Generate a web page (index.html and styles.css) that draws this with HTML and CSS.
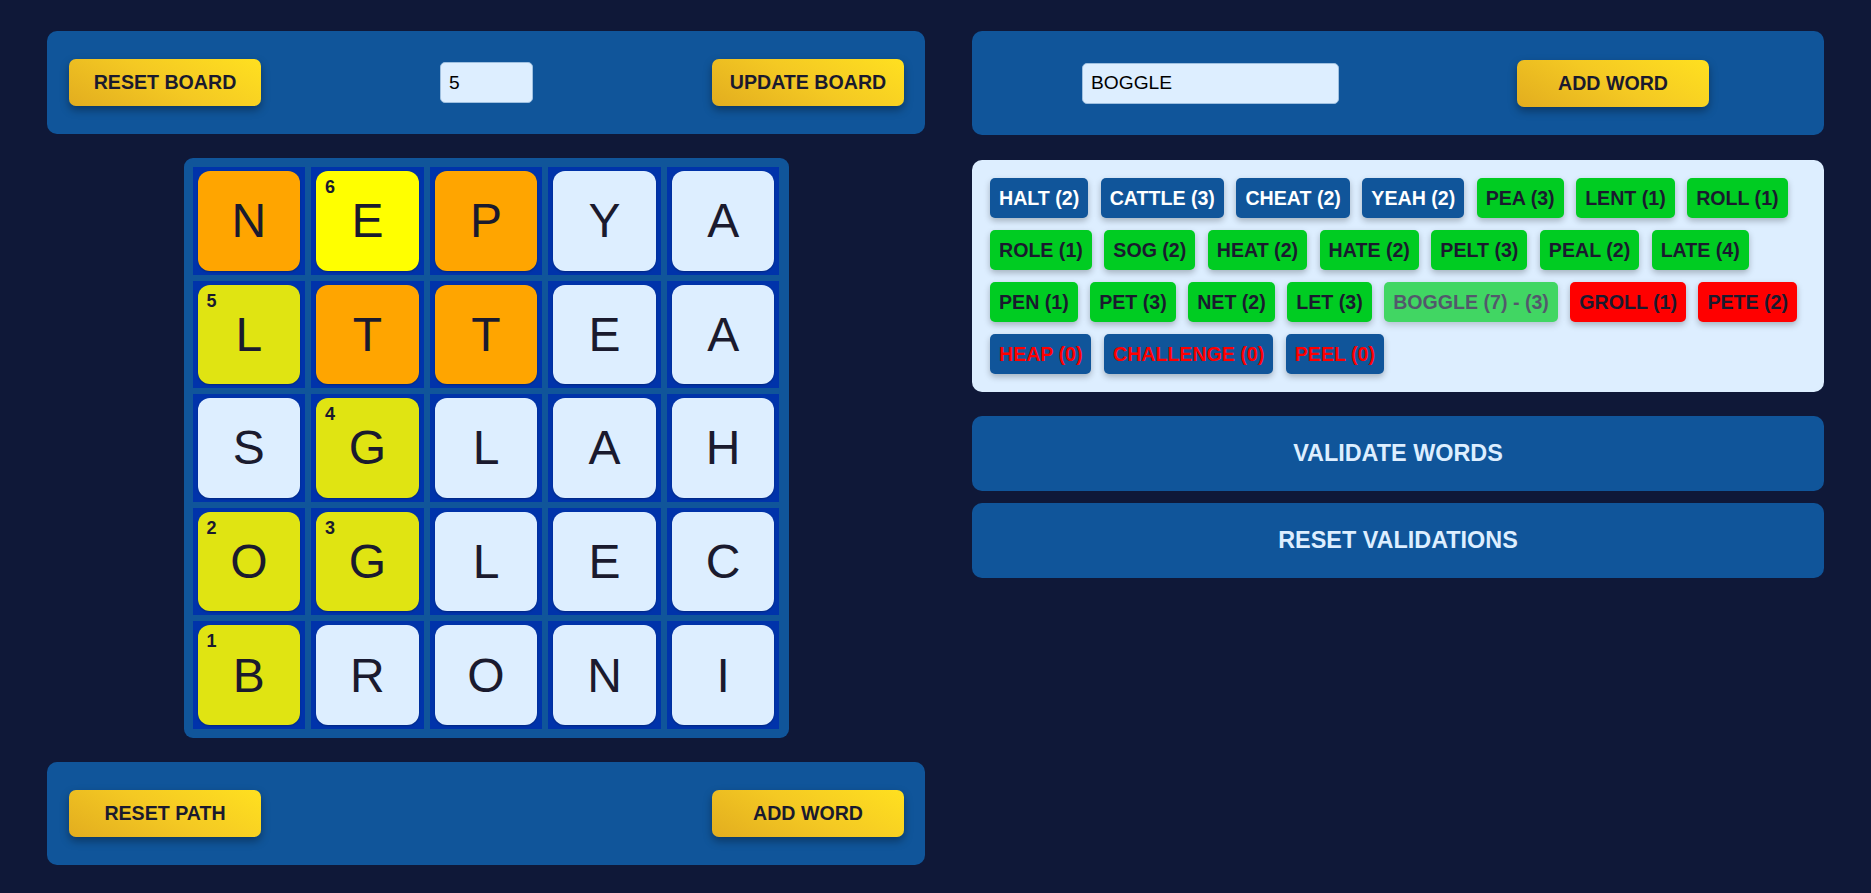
FILE: index.html
```html
<!DOCTYPE html>
<html lang="en">
<head>
<meta charset="utf-8">
<title>Boggle</title>
<link rel="stylesheet" href="styles.css">
</head>
<body>
<div class="app">
  <div class="col left">
    <div class="panel controls">
      <button class="gold-btn">RESET BOARD</button>
      <input class="size-input" type="text" value="5">
      <button class="gold-btn">UPDATE BOARD</button>
    </div>
    <div class="board">
      <div class="cell"><div class="tile orange">N</div></div>
      <div class="cell"><div class="tile yellow"><span class="num">6</span>E</div></div>
      <div class="cell"><div class="tile orange">P</div></div>
      <div class="cell"><div class="tile">Y</div></div>
      <div class="cell"><div class="tile">A</div></div>

      <div class="cell"><div class="tile lime"><span class="num">5</span>L</div></div>
      <div class="cell"><div class="tile orange">T</div></div>
      <div class="cell"><div class="tile orange">T</div></div>
      <div class="cell"><div class="tile">E</div></div>
      <div class="cell"><div class="tile">A</div></div>

      <div class="cell"><div class="tile">S</div></div>
      <div class="cell"><div class="tile lime"><span class="num">4</span>G</div></div>
      <div class="cell"><div class="tile">L</div></div>
      <div class="cell"><div class="tile">A</div></div>
      <div class="cell"><div class="tile">H</div></div>

      <div class="cell"><div class="tile lime"><span class="num">2</span>O</div></div>
      <div class="cell"><div class="tile lime"><span class="num">3</span>G</div></div>
      <div class="cell"><div class="tile">L</div></div>
      <div class="cell"><div class="tile">E</div></div>
      <div class="cell"><div class="tile">C</div></div>

      <div class="cell"><div class="tile lime"><span class="num">1</span>B</div></div>
      <div class="cell"><div class="tile">R</div></div>
      <div class="cell"><div class="tile">O</div></div>
      <div class="cell"><div class="tile">N</div></div>
      <div class="cell"><div class="tile">I</div></div>
    </div>
    <div class="panel controls">
      <button class="gold-btn">RESET PATH</button>
      <button class="gold-btn">ADD WORD</button>
    </div>
  </div>
  <div class="col right">
    <div class="panel add-row">
      <input class="word-input" type="text" value="BOGGLE">
      <button class="gold-btn">ADD WORD</button>
    </div>
    <div class="words">
      <span class="chip blue">HALT (2)</span>
      <span class="chip blue">CATTLE (3)</span>
      <span class="chip blue">CHEAT (2)</span>
      <span class="chip blue">YEAH (2)</span>
      <span class="chip green">PEA (3)</span>
      <span class="chip green">LENT (1)</span>
      <span class="chip green">ROLL (1)</span>
      <span class="chip green">ROLE (1)</span>
      <span class="chip green">SOG (2)</span>
      <span class="chip green">HEAT (2)</span>
      <span class="chip green">HATE (2)</span>
      <span class="chip green">PELT (3)</span>
      <span class="chip green">PEAL (2)</span>
      <span class="chip green">LATE (4)</span>
      <span class="chip green">PEN (1)</span>
      <span class="chip green">PET (3)</span>
      <span class="chip green">NET (2)</span>
      <span class="chip green">LET (3)</span>
      <span class="chip green faded">BOGGLE (7) - (3)</span>
      <span class="chip red">GROLL (1)</span>
      <span class="chip red">PETE (2)</span>
      <span class="chip blue invalid">HEAP (0)</span>
      <span class="chip blue invalid">CHALLENGE (0)</span>
      <span class="chip blue invalid">PEEL (0)</span>
    </div>
    <div class="actions">
      <button class="wide-btn">VALIDATE WORDS</button>
      <button class="wide-btn">RESET VALIDATIONS</button>
    </div>
  </div>
</div>
</body>
</html>
```

FILE: styles.css
```css
* { box-sizing: border-box; }

html, body {
  margin: 0;
  padding: 0;
  background: #0f1838;
}

body {
  font-family: "Liberation Sans", Arial, sans-serif;
  color: #1a1a2e;
}

.app {
  display: grid;
  grid-template-columns: 878px 852px;
  column-gap: 47px;
  padding: 31px 47px 0 47px;
}

.col {
  display: flex;
  flex-direction: column;
}

.left { align-items: stretch; }

.panel {
  background: #10559a;
  border-radius: 10px;
  height: 103px;
  display: flex;
  align-items: center;
}

.controls {
  justify-content: space-between;
  padding: 0 21px 0 22px;
}

.gold-btn {
  width: 192px;
  height: 47px;
  border: none;
  border-radius: 7px;
  background: linear-gradient(30deg, #e2ad1f 0%, #f4c923 50%, #ffe020 100%);
  color: #1a1a2e;
  font-family: "Liberation Sans", Arial, sans-serif;
  font-weight: bold;
  font-size: 19.6px;
  box-shadow: 0 4px 8px rgba(0, 0, 0, 0.35);
  cursor: pointer;
}

.size-input,
.word-input {
  height: 41px;
  border: 1px solid #9fc0e0;
  border-radius: 5px;
  background: #ddeeff;
  font-family: "Liberation Sans", Arial, sans-serif;
  font-size: 19.2px;
  color: #000;
  padding: 0 8px;
  outline: none;
}

.size-input { width: 93px; }
.word-input { width: 257px; }

.board {
  align-self: center;
  width: 605px;
  margin: 24px 0 24px;
  background: #10559a;
  border-radius: 9px;
  padding: 9px;
  display: grid;
  grid-template-columns: repeat(5, 1fr);
  gap: 6px;
}

.cell {
  background: #0033aa;
  padding: 4px 5px;
}

.tile {
  position: relative;
  height: 99.6px;
  border-radius: 12px;
  background: #ddeeff;
  display: flex;
  align-items: center;
  justify-content: center;
  font-size: 48px;
  color: #1a1a2e;
  box-shadow: 0 1px 2px rgba(0, 0, 0, 0.25);
}

.tile.orange { background: #ffa500; }
.tile.yellow { background: #ffff00; }
.tile.lime { background: #e0e412; }

.num {
  position: absolute;
  top: 6px;
  left: 9px;
  font-size: 18px;
  font-weight: bold;
  line-height: 20px;
}

.add-row {
  justify-content: space-around;
  padding: 0 26px 0 21px;
  height: 104px;
}

.words {
  margin-top: 25px;
  background: #ddeeff;
  border-radius: 10px;
  padding: 18px;
  display: flex;
  flex-wrap: wrap;
  gap: 12px 12.5px;
}

.chip {
  display: inline-block;
  height: 40px;
  line-height: 40px;
  padding: 0 9px;
  border-radius: 5px;
  font-size: 19.6px;
  font-weight: bold;
  box-shadow: 0 3px 6px rgba(0, 0, 0, 0.25);
  white-space: nowrap;
}

.chip.blue { background: #10559a; color: #ffffff; }
.chip.green { background: #00cc22; color: #1a1a2e; }
.chip.red { background: #ff0000; color: #1a1a2e; }
.chip.invalid { color: #ff0000; }
.chip.faded { opacity: 0.7; }

.actions {
  margin-top: 24px;
  display: flex;
  flex-direction: column;
  gap: 12px;
}

.wide-btn {
  height: 75px;
  border: none;
  border-radius: 10px;
  background: #10559a;
  color: #ddeeff;
  font-family: "Liberation Sans", Arial, sans-serif;
  font-weight: bold;
  font-size: 23.4px;
  cursor: pointer;
}
```
